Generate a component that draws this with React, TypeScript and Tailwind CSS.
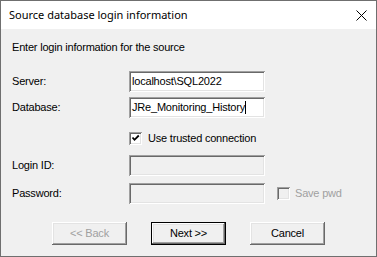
import React from "react";

const sunken =
  "shadow-[inset_1px_1px_0_#a0a0a0,inset_-1px_-1px_0_#ffffff,inset_2px_2px_0_#696969,inset_-2px_-2px_0_#e3e3e3]";
const raised =
  "shadow-[inset_-1px_-1px_0_#696969,inset_1px_1px_0_#ffffff,inset_-2px_-2px_0_#a0a0a0,inset_2px_2px_0_#e3e3e3]";

const Field = ({ value, disabled, caret }: { value?: string; disabled?: boolean; caret?: boolean }) => (
  <div
    className={`w-[136px] h-[21px] flex items-center pl-[3px] text-[11px] text-black ${sunken} ${
      disabled ? "bg-[#f0f0f0]" : "bg-white"
    }`}
  >
    {value}
    {caret && <span className="inline-block w-px h-[13px] bg-black" />}
  </div>
);

const Check = ({ checked, disabled }: { checked?: boolean; disabled?: boolean }) => (
  <div className={`w-[13px] h-[13px] relative ${sunken} ${disabled ? "bg-[#f0f0f0]" : "bg-white"}`}>
    {checked && (
      <svg className="absolute left-0 top-0" width="13" height="13" viewBox="0 0 13 13">
        <path d="M3.5 5.5 L5.5 7.8 L9.8 3.5" fill="none" stroke="#000" strokeWidth="1.8" />
      </svg>
    )}
  </div>
);

const Button = ({ label, disabled, isDefault }: { label: string; disabled?: boolean; isDefault?: boolean }) => (
  <div className={`w-[75px] h-[23px] ${isDefault ? "border border-black" : ""}`}>
    <div
      className={`w-full h-full flex items-center justify-center bg-[#f0f0f0] text-[11px] ${raised} ${
        disabled ? "text-[#a0a0a0]" : "text-black"
      }`}
    >
      {label}
    </div>
  </div>
);

const Row = ({ label, children }: { label: string; children: React.ReactNode }) => (
  <div className="flex items-center h-[21px]">
    <div className="w-[117px] text-[11px] text-black">{label}</div>
    {children}
  </div>
);

export default function App() {
  return (
    <div className="w-[377px] h-[257px] border border-[#6f6f6f] bg-[#f0f0f0] flex flex-col font-['Liberation_Sans',Arial,sans-serif] tracking-[-0.2px]">
      <div className="h-[28px] bg-white flex items-center justify-between pl-[8px] pr-[9px]">
        <span className="text-[11px] tracking-normal text-black font-['Noto_Sans',sans-serif]">
          Source database login information
        </span>
        <svg width="11" height="11" viewBox="0 0 11 11">
          <path d="M0.5 0.5 L10.5 10.5 M10.5 0.5 L0.5 10.5" stroke="#000" strokeWidth="1" />
        </svg>
      </div>
      <div className="flex-1 flex flex-col pl-[11px]">
        <div className="mt-[12px] text-[11px] leading-[13px] text-black">Enter login information for the source</div>
        <div className="mt-[17px]">
          <Row label="Server:">
            <Field value="localhost\SQL2022" />
          </Row>
        </div>
        <div className="mt-[5px]">
          <Row label="Database:">
            <Field value="JRe_Monitoring_History" caret />
          </Row>
        </div>
        <div className="mt-[14px] pl-[117px] flex items-center gap-[6px] h-[13px]">
          <Check checked />
          <span className="text-[11px] text-black">Use trusted connection</span>
        </div>
        <div className="mt-[10px]">
          <Row label="Login ID:">
            <Field disabled />
          </Row>
        </div>
        <div className="mt-[7px]">
          <Row label="Password:">
            <Field disabled />
            <div className="ml-[12px] flex items-center gap-[5px]">
              <Check disabled />
              <span className="text-[11px] text-[#a0a0a0]">Save pwd</span>
            </div>
          </Row>
        </div>
        <div className="mt-[18px] ml-[40px] flex gap-[24px]">
          <Button label="<< Back" disabled />
          <Button label="Next >>" isDefault />
          <Button label="Cancel" />
        </div>
      </div>
    </div>
  );
}
